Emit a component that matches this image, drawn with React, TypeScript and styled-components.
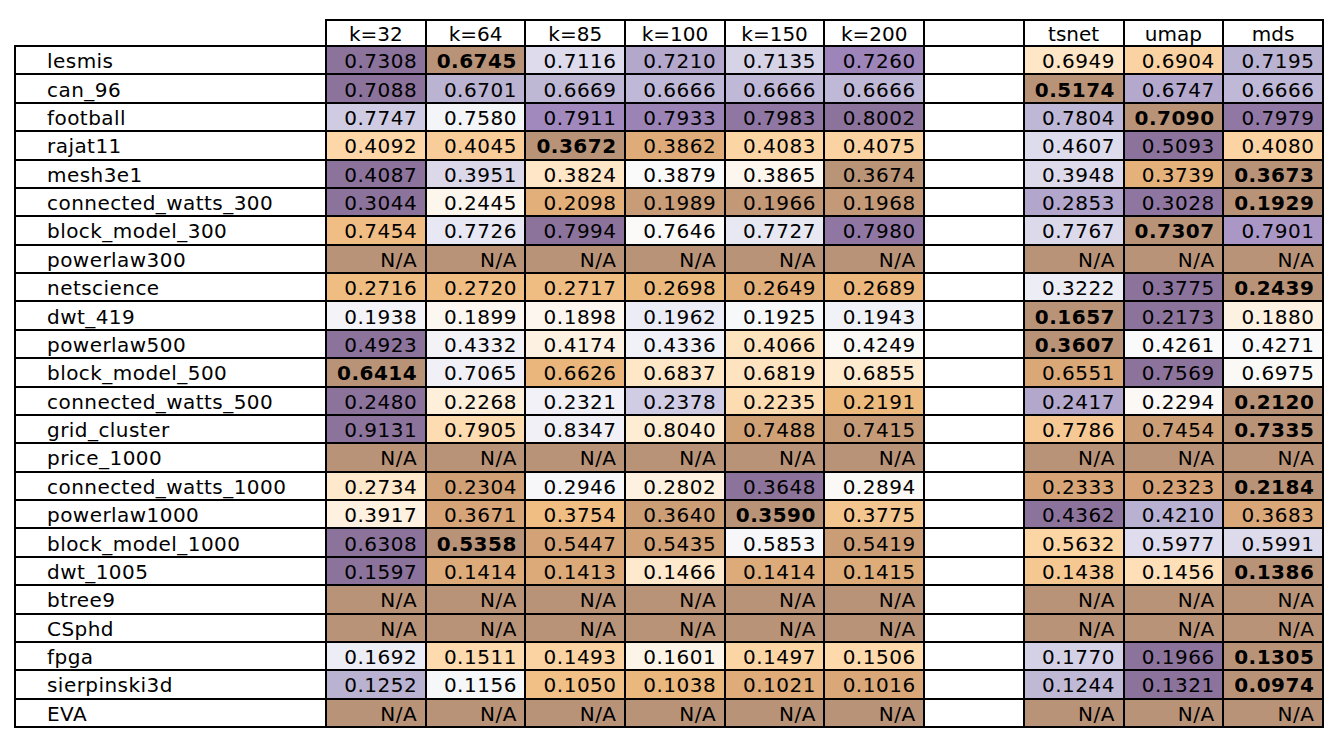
import React from "react";
import styled, { createGlobalStyle } from "styled-components";

const GlobalStyle = createGlobalStyle`
  html, body { margin: 0; padding: 0; background: #ffffff; }
  body { font-family: "DejaVu Sans", "Liberation Sans", sans-serif; }
`;

type Row = { name: string; values: (number | null)[] };

const NA = null;
const rows: Row[] = [
  { name: "lesmis", values: [0.7308, 0.6745, 0.7116, 0.721, 0.7135, 0.726, 0.6949, 0.6904, 0.7195] },
  { name: "can_96", values: [0.7088, 0.6701, 0.6669, 0.6666, 0.6666, 0.6666, 0.5174, 0.6747, 0.6666] },
  { name: "football", values: [0.7747, 0.758, 0.7911, 0.7933, 0.7983, 0.8002, 0.7804, 0.709, 0.7979] },
  { name: "rajat11", values: [0.4092, 0.4045, 0.3672, 0.3862, 0.4083, 0.4075, 0.4607, 0.5093, 0.408] },
  { name: "mesh3e1", values: [0.4087, 0.3951, 0.3824, 0.3879, 0.3865, 0.3674, 0.3948, 0.3739, 0.3673] },
  { name: "connected_watts_300", values: [0.3044, 0.2445, 0.2098, 0.1989, 0.1966, 0.1968, 0.2853, 0.3028, 0.1929] },
  { name: "block_model_300", values: [0.7454, 0.7726, 0.7994, 0.7646, 0.7727, 0.798, 0.7767, 0.7307, 0.7901] },
  { name: "powerlaw300", values: [NA, NA, NA, NA, NA, NA, NA, NA, NA] },
  { name: "netscience", values: [0.2716, 0.272, 0.2717, 0.2698, 0.2649, 0.2689, 0.3222, 0.3775, 0.2439] },
  { name: "dwt_419", values: [0.1938, 0.1899, 0.1898, 0.1962, 0.1925, 0.1943, 0.1657, 0.2173, 0.188] },
  { name: "powerlaw500", values: [0.4923, 0.4332, 0.4174, 0.4336, 0.4066, 0.4249, 0.3607, 0.4261, 0.4271] },
  { name: "block_model_500", values: [0.6414, 0.7065, 0.6626, 0.6837, 0.6819, 0.6855, 0.6551, 0.7569, 0.6975] },
  { name: "connected_watts_500", values: [0.248, 0.2268, 0.2321, 0.2378, 0.2235, 0.2191, 0.2417, 0.2294, 0.212] },
  { name: "grid_cluster", values: [0.9131, 0.7905, 0.8347, 0.804, 0.7488, 0.7415, 0.7786, 0.7454, 0.7335] },
  { name: "price_1000", values: [NA, NA, NA, NA, NA, NA, NA, NA, NA] },
  { name: "connected_watts_1000", values: [0.2734, 0.2304, 0.2946, 0.2802, 0.3648, 0.2894, 0.2333, 0.2323, 0.2184] },
  { name: "powerlaw1000", values: [0.3917, 0.3671, 0.3754, 0.364, 0.359, 0.3775, 0.4362, 0.421, 0.3683] },
  { name: "block_model_1000", values: [0.6308, 0.5358, 0.5447, 0.5435, 0.5853, 0.5419, 0.5632, 0.5977, 0.5991] },
  { name: "dwt_1005", values: [0.1597, 0.1414, 0.1413, 0.1466, 0.1414, 0.1415, 0.1438, 0.1456, 0.1386] },
  { name: "btree9", values: [NA, NA, NA, NA, NA, NA, NA, NA, NA] },
  { name: "CSphd", values: [NA, NA, NA, NA, NA, NA, NA, NA, NA] },
  { name: "fpga", values: [0.1692, 0.1511, 0.1493, 0.1601, 0.1497, 0.1506, 0.177, 0.1966, 0.1305] },
  { name: "sierpinski3d", values: [0.1252, 0.1156, 0.105, 0.1038, 0.1021, 0.1016, 0.1244, 0.1321, 0.0974] },
  { name: "EVA", values: [NA, NA, NA, NA, NA, NA, NA, NA, NA] },
];

const kHeaders = ["k=32", "k=64", "k=85", "k=100", "k=150", "k=200"];
const mHeaders = ["tsnet", "umap", "mds"];

const PUOR: [number, number, number][] = [
  [127, 59, 8],
  [179, 88, 6],
  [224, 130, 20],
  [253, 184, 99],
  [254, 224, 182],
  [247, 247, 247],
  [216, 218, 235],
  [178, 171, 210],
  [128, 115, 172],
  [84, 39, 136],
  [45, 0, 75],
];
const ALPHA = 0.55;

function puor(t: number): string {
  const x = Math.max(0, Math.min(1, t)) * (PUOR.length - 1);
  const i = Math.min(PUOR.length - 2, Math.floor(x));
  const f = x - i;
  const c = PUOR[i].map((v, k) => v + (PUOR[i + 1][k] - v) * f);
  const b = c.map((v) => Math.round(v * ALPHA + 255 * (1 - ALPHA)));
  return `rgb(${b[0]}, ${b[1]}, ${b[2]})`;
}

const COLS = "313px repeat(10, 99.7px)";

const Grid = styled.div`
  display: grid;
  grid-template-columns: ${COLS};
  grid-template-rows: 28px repeat(24, 28.375px);
  margin: 19px 0 0 14px;
  width: max-content;
  color: #000;
  font-size: 20px;
  line-height: 1;
`;

const Corner = styled.div`
  border-right: 2px solid #000;
  border-bottom: 2px solid #000;
`;

const HeaderCell = styled.div`
  box-sizing: border-box;
  border-top: 2px solid #000;
  border-right: 2px solid #000;
  border-bottom: 2px solid #000;
  display: flex;
  align-items: center;
  justify-content: center;
  padding-top: 2px;
  background: #fff;
`;

const NameCell = styled.div`
  box-sizing: border-box;
  border-left: 2px solid #000;
  border-right: 2px solid #000;
  border-bottom: 2px solid #000;
  display: flex;
  align-items: center;
  padding: 2px 0 0 31px;
  letter-spacing: 0.45px;
  white-space: nowrap;
`;

const ValueCell = styled.div<{ $bg: string; $bold?: boolean }>`
  box-sizing: border-box;
  border-right: 2px solid #000;
  border-bottom: 2px solid #000;
  background: ${(p) => p.$bg};
  display: flex;
  align-items: center;
  justify-content: flex-end;
  padding: 2px 7.5px 0 0;
  letter-spacing: 0.5px;
  font-weight: ${(p) => (p.$bold ? 700 : 400)};
  white-space: nowrap;
`;

const SpacerCell = styled.div`
  box-sizing: border-box;
  border-right: 2px solid #000;
  border-bottom: 2px solid #000;
  background: #fff;
`;

function renderRow(row: Row) {
  const nums = row.values.filter((v): v is number => v !== null);
  const min = nums.length ? Math.min(...nums) : 0;
  const max = nums.length ? Math.max(...nums) : 1;
  const cells = row.values.map((v, i) => {
    if (v === null) {
      return (
        <ValueCell key={i} $bg={puor(0)}>
          N/A
        </ValueCell>
      );
    }
    const t = max > min ? (v - min) / (max - min) : 0.5;
    return (
      <ValueCell key={i} $bg={puor(t)} $bold={v === min}>
        {v.toFixed(4)}
      </ValueCell>
    );
  });
  return (
    <React.Fragment key={row.name}>
      <NameCell>{row.name}</NameCell>
      {cells.slice(0, 6)}
      <SpacerCell />
      {cells.slice(6)}
    </React.Fragment>
  );
}

export default function App() {
  return (
    <>
      <GlobalStyle />
      <Grid>
        <Corner />
        {kHeaders.map((h) => (
          <HeaderCell key={h}>{h}</HeaderCell>
        ))}
        <HeaderCell />
        {mHeaders.map((h) => (
          <HeaderCell key={h}>{h}</HeaderCell>
        ))}
        {rows.map(renderRow)}
      </Grid>
    </>
  );
}
